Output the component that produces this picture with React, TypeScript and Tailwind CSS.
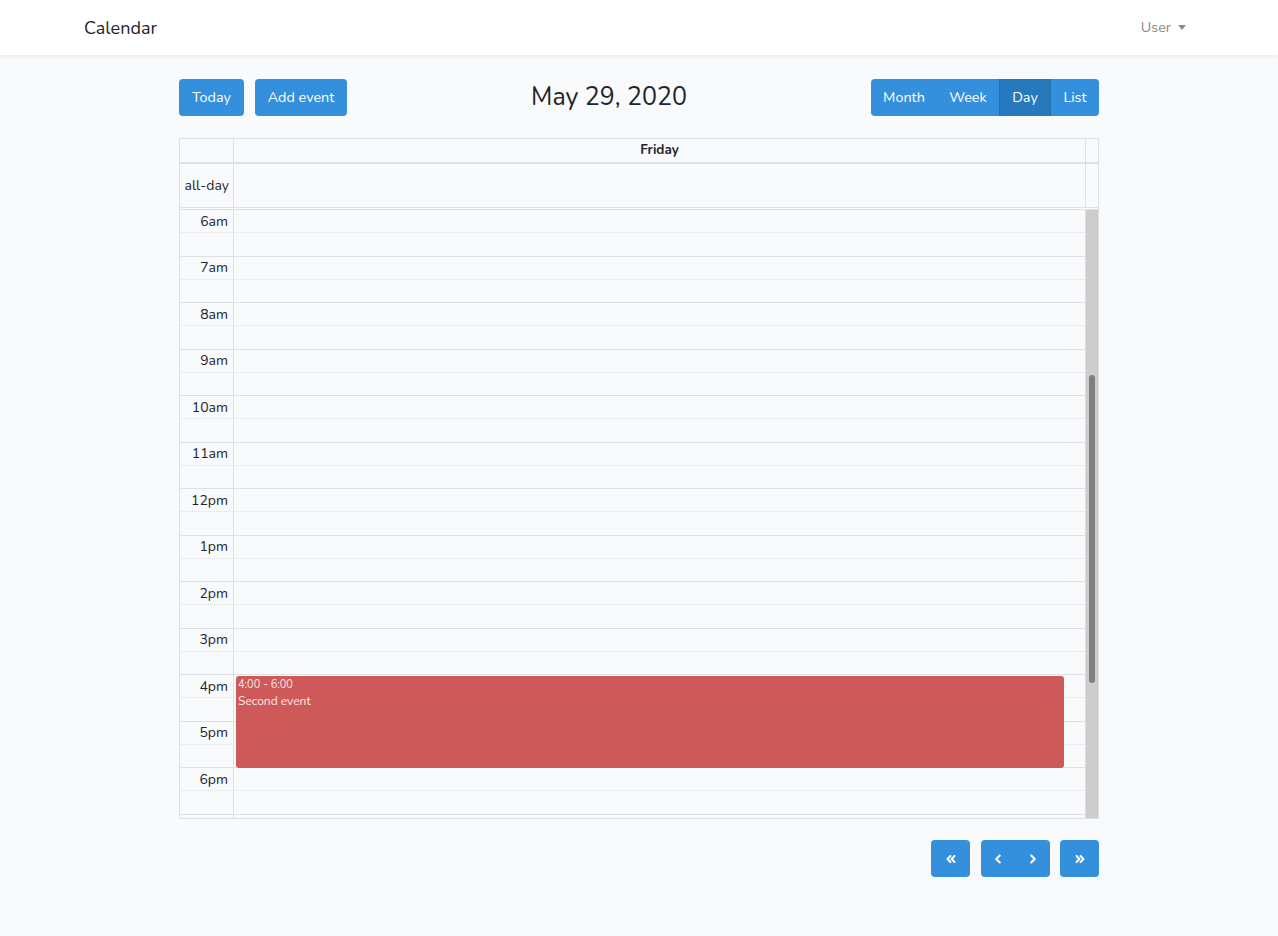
import { ChevronLeft, ChevronRight, ChevronsLeft, ChevronsRight } from "lucide-react"

const hours = ["6am", "7am", "8am", "9am", "10am", "11am", "12pm", "1pm", "2pm", "3pm", "4pm", "5pm", "6pm", ""]

const viewButtons = [
  { label: "Month", width: "w-[66px]", active: false },
  { label: "Week", width: "w-[62px]", active: false },
  { label: "Day", width: "w-[52px]", active: true },
  { label: "List", width: "w-[48px]", active: false },
]

const App = () => {
  return (
    <div className="min-h-screen bg-[#f8fafc] text-[#212529]" style={{ fontFamily: "Nunito, Lato, 'Noto Sans', sans-serif" }}>
      <nav className="h-[55px] bg-white shadow-[0_2px_4px_rgba(0,0,0,0.06)]">
        <div className="mx-auto flex h-full w-[1140px] items-center justify-between px-[15px]">
          <span className="pt-[1px] text-[18px]">Calendar</span>
          <span className="flex items-center gap-[7px] px-2 pt-[1px] text-[14.4px] text-[#8a8a8a]">
            User
            <span className="h-0 w-0 border-x-[4px] border-t-[5px] border-x-transparent border-t-[#8a8a8a]" />
          </span>
        </div>
      </nav>

      <main className="mx-auto w-[920px] pt-[24px]">
        <div className="flex h-[37px] items-center justify-between">
          <div className="flex gap-[11px]">
            <button className="h-[37px] w-[65px] rounded bg-[#3490dc] pt-[1px] text-[14.4px] text-white">Today</button>
            <button className="h-[37px] w-[92px] rounded bg-[#3490dc] pt-[1px] text-[14.4px] text-white">Add event</button>
          </div>
          <h2 className="pt-[1px] text-[25px]">May 29, 2020</h2>
          <div className="flex h-[37px] overflow-hidden rounded">
            {viewButtons.map((b) => (
              <button
                key={b.label}
                className={`${b.width} h-full pt-[1px] text-[14.4px] text-white ${b.active ? "bg-[#2779bd] border-x border-[#256fad]" : "bg-[#3490dc]"}`}
              >
                {b.label}
              </button>
            ))}
          </div>
        </div>

        <div className="mt-[22px] border border-[#dde0e4] text-[14px]">
          {/* header */}
          <div className="flex h-[25px] border-b-2 border-[#dde0e4]">
            <div className="w-[54px] shrink-0 border-r border-[#dde0e4]" />
            <div className="flex flex-1 items-center justify-center text-[13.5px] font-bold">Friday</div>
            <div className="w-[13px] shrink-0 border-l border-[#dde0e4]" />
          </div>
          {/* all-day */}
          <div className="flex h-[44px] border-b border-[#dde0e4]">
            <div className="flex w-[54px] shrink-0 items-center justify-end border-r border-[#dde0e4] pr-[4px]">all-day</div>
            <div className="flex-1" />
            <div className="w-[13px] shrink-0 border-l border-[#dde0e4]" />
          </div>
          <div className="h-[2px] border-b border-[#dde0e4]" />

          {/* time grid */}
          <div className="flex h-[608px] overflow-hidden">
            <div className="relative flex-1">
              {hours.map((h, i) => (
                <div key={i}>
                  <div className="flex h-[23.25px] border-b border-dotted border-[#dde0e4]">
                    <div className="flex w-[54px] shrink-0 items-center justify-end border-r border-[#dde0e4] pr-[5px]">{h}</div>
                    <div className="flex-1" />
                  </div>
                  <div className="flex h-[23.25px] border-b border-[#dde0e4]">
                    <div className="w-[54px] shrink-0 border-r border-[#dde0e4]" />
                    <div className="flex-1" />
                  </div>
                </div>
              ))}
              <div className="absolute left-[56px] right-[21px] top-[466px] h-[92px] rounded-[3px] bg-[#cd5a58] px-[2px] pt-[2px] text-[#fbe9e9]">
                <div className="text-[11px] leading-[14px]">4:00 - 6:00</div>
                <div className="text-[12px] leading-[18px]">Second event</div>
              </div>
            </div>
            <div className="flex w-[13px] shrink-0 flex-col border-l border-[#dde0e4] bg-[#cdcdcd] pr-[1px]">
              <div className="h-[165px]" />
              <div className="mx-auto h-[308px] w-[6px] rounded-full bg-[#7f7f7f]" />
            </div>
          </div>
        </div>

        <div className="mt-[21px] flex justify-end gap-[10px]">
          <button className="mr-[1px] flex h-[37px] w-[39px] items-center justify-center rounded bg-[#3490dc] text-white">
            <ChevronsLeft size={14} strokeWidth={3.5} />
          </button>
          <div className="flex h-[37px] w-[69px] overflow-hidden rounded bg-[#3490dc] text-white">
            <button className="flex flex-1 items-center justify-center">
              <ChevronLeft size={14} strokeWidth={3.5} />
            </button>
            <button className="flex flex-1 items-center justify-center">
              <ChevronRight size={14} strokeWidth={3.5} />
            </button>
          </div>
          <button className="flex h-[37px] w-[39px] items-center justify-center rounded bg-[#3490dc] text-white">
            <ChevronsRight size={14} strokeWidth={3.5} />
          </button>
        </div>
      </main>
    </div>
  )
}

export default App
